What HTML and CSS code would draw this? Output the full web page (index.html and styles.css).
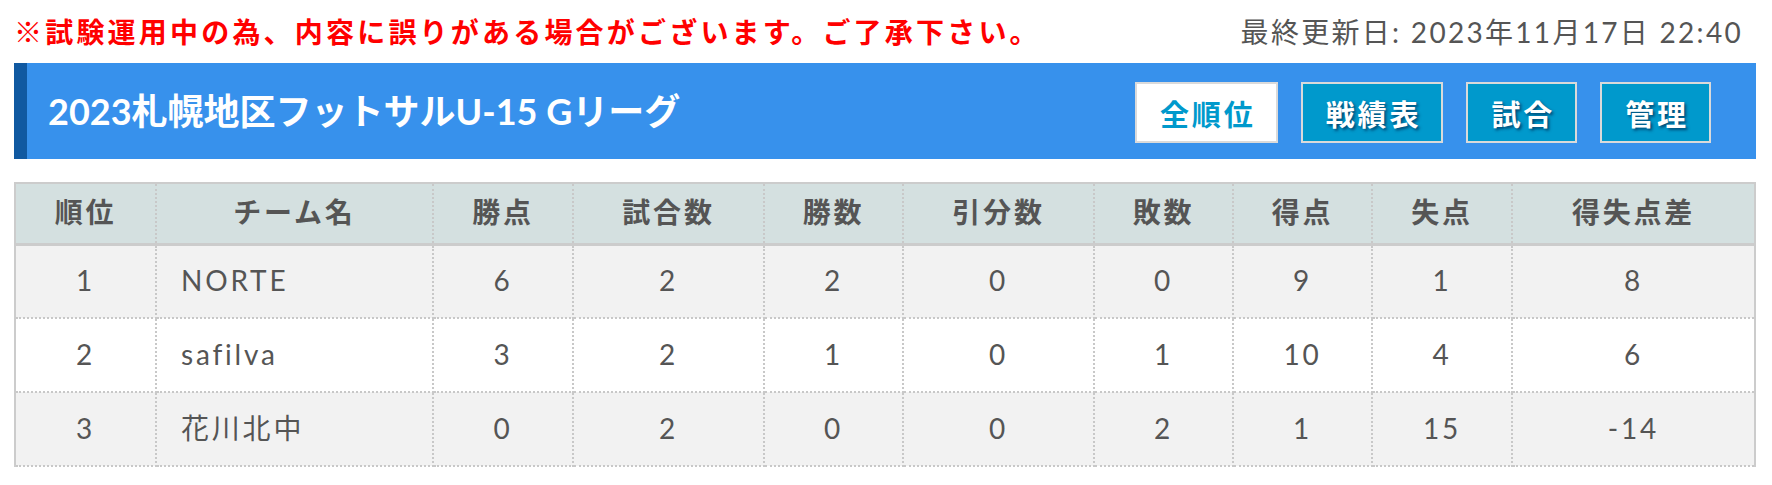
FILE: index.html
```html
<!DOCTYPE html>
<html lang="ja">
<head>
<meta charset="utf-8">
<title>2023札幌地区フットサルU-15 Gリーグ</title>
<link rel="stylesheet" href="styles.css">
</head>
<body>
<div class="top">
  <p class="notice">※試験運用中の為、内容に誤りがある場合がございます。ご了承下さい。</p>
  <p class="updated">最終更新日: 2023年11月17日 22:40</p>
</div>
<header class="bar">
  <h1 class="title">2023札幌地区フットサルU-15 Gリーグ</h1>
  <nav class="nav">
    <a class="btn btn-active" href="#">全順位</a>
    <a class="btn" href="#">戦績表</a>
    <a class="btn" href="#">試合</a>
    <a class="btn" href="#">管理</a>
  </nav>
</header>
<div class="table-wrap">
<table class="standings">
  <colgroup>
    <col class="w-rank"><col class="w-team"><col class="w-2"><col class="w-3"><col class="w-2b"><col class="w-3"><col class="w-2b"><col class="w-2c"><col class="w-2"><col class="w-4">
  </colgroup>
  <thead>
    <tr><th>順位</th><th>チーム名</th><th>勝点</th><th>試合数</th><th>勝数</th><th>引分数</th><th>敗数</th><th>得点</th><th>失点</th><th>得失点差</th></tr>
  </thead>
  <tbody>
    <tr><td>1</td><td class="team">NORTE</td><td>6</td><td>2</td><td>2</td><td>0</td><td>0</td><td>9</td><td>1</td><td>8</td></tr>
    <tr><td>2</td><td class="team">safilva</td><td>3</td><td>2</td><td>1</td><td>0</td><td>1</td><td>10</td><td>4</td><td>6</td></tr>
    <tr><td>3</td><td class="team">花川北中</td><td>0</td><td>2</td><td>0</td><td>0</td><td>2</td><td>1</td><td>15</td><td>-14</td></tr>
  </tbody>
</table>
</div>
</body>
</html>
```
FILE: styles.css
```css
* { box-sizing: border-box; }
html, body { margin: 0; padding: 0; background: #fff; }
body {
  font-family: Lato, "Noto Sans CJK JP", sans-serif;
  color: #555;
}
.top {
  display: flex;
  justify-content: space-between;
  align-items: center;
  height: 63px;
  padding: 0 29px 0 14px;
}
.top p { margin: 0; font-size: 28px; line-height: 1; }
.notice { color: #ff0000; font-weight: bold; letter-spacing: 3.2px; }
.updated { color: #555; font-weight: normal; letter-spacing: 2.3px; }

.bar {
  display: flex;
  align-items: center;
  justify-content: space-between;
  height: 96px;
  margin: 0 16px 0 14px;
  background: #3791ec;
  border-left: 13px solid #1059a1;
  padding: 0 45px 0 21px;
}
.title {
  margin: 0;
  color: #fff;
  font-size: 36px;
  font-weight: bold;
  line-height: 1;
}
.nav { display: flex; gap: 23px; padding-top: 3px; }
.btn {
  display: flex;
  align-items: center;
  justify-content: center;
  height: 61px;
  padding: 0 20px 0 23px;
  border: 2px solid #dadada;
  background: #0099cc;
  color: #fff;
  font-size: 29px;
  font-weight: bold;
  letter-spacing: 0.1em;
  text-decoration: none;
  text-shadow: 2px 2px 3px rgba(0, 40, 80, 0.7);
}
.btn-active {
  background: #fff;
  color: #0099cc;
  text-shadow: none;
}

.table-wrap { padding: 23px 16px 0 14px; }
.standings {
  width: 100%;
  table-layout: fixed;
  border-collapse: collapse;
  border-top: 2px solid #cccccc;
  border-left: 2px solid #cccccc;
  border-right: 2px solid #cccccc;
  font-size: 28px;
  letter-spacing: 0.1em;
}
.w-rank { width: 141px; }
.w-team { width: 277px; }
.w-2 { width: 140px; }
.w-2b { width: 139px; }
.w-2c { width: 139px; }
.w-3 { width: 191px; }
.w-4 { width: auto; }
.standings th, .standings td {
  border: 2px dotted #c8c8c8;
  text-align: center;
  color: #555;
  line-height: 1.2;
}
.standings th {
  height: 61px;
  background: #d4e0e0;
  font-weight: bold;
  border-bottom: 3px solid #cccccc;
}
.standings td {
  height: 74px;
  font-weight: normal;
  background: #f2f2f2;
}
.standings tbody tr:nth-child(even) td { background: #fff; }
.standings td.team { text-align: left; padding-left: 24px; }
```
